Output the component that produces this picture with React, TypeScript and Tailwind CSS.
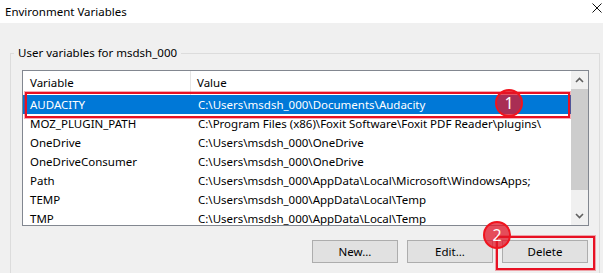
const rows = [
  { name: "AUDACITY", value: "C:\\Users\\msdsh_000\\Documents\\Audacity", selected: true },
  { name: "MOZ_PLUGIN_PATH", value: "C:\\Program Files (x86)\\Foxit Software\\Foxit PDF Reader\\plugins\\" },
  { name: "OneDrive", value: "C:\\Users\\msdsh_000\\OneDrive" },
  { name: "OneDriveConsumer", value: "C:\\Users\\msdsh_000\\OneDrive" },
  { name: "Path", value: "C:\\Users\\msdsh_000\\AppData\\Local\\Microsoft\\WindowsApps;" },
  { name: "TEMP", value: "C:\\Users\\msdsh_000\\AppData\\Local\\Temp" },
  { name: "TMP", value: "C:\\Users\\msdsh_000\\AppData\\Local\\Temp" },
];

function Marker({ n, className }: { n: number; className: string }) {
  return (
    <div
      className={`absolute w-[28px] h-[28px] rounded-full bg-[rgba(226,22,40,0.75)] border-2 border-[#f0141e] flex items-center justify-center text-white text-[16px] leading-none ${className}`}
    >
      {n}
    </div>
  );
}

function WinButton({ label }: { label: string }) {
  return (
    <button className="w-[86px] h-[23px] bg-[#e1e1e1] border border-[#adadad] text-[11.5px] text-black">
      {label}
    </button>
  );
}

export default function App() {
  return (
    <div
      className="relative w-[603px] h-[273px] overflow-hidden bg-[#f0f0f0] text-black"
      style={{ fontFamily: '"Noto Sans", "Open Sans", sans-serif' }}
    >
      {/* title bar */}
      <div className="h-[23px] bg-white flex items-center justify-between pl-[5px] pr-[1px]">
        <span className="text-[11.5px] leading-none">Environment Variables</span>
        <svg width="10" height="10" viewBox="0 0 10 10" className="mb-[8px]">
          <path d="M0.5 0.5 L9.5 9.5 M9.5 0.5 L0.5 9.5" stroke="#111" strokeWidth="1" />
        </svg>
      </div>

      <fieldset className="mt-[22px] ml-[10px] w-[590px] h-[240px] border border-[#dcdcdc]">
        <legend className="ml-[3px] px-[4px] text-[11.5px] leading-[16px]">User variables for msdsh_000</legend>

        {/* list view */}
        <div className="mt-[9px] ml-[11px] w-[567px] h-[156px] border border-[#828790] bg-white flex text-[11.5px]">
          <div className="flex-1 overflow-hidden">
            <div className="h-[24px] flex items-center">
              <div className="w-[168px] h-full pl-[7px] flex items-center border-r border-[#e5e5e5]">Variable</div>
              <div className="pl-[6px]">Value</div>
            </div>
            {rows.map((r) => (
              <div
                key={r.name}
                className={`h-[19px] flex items-center whitespace-nowrap ${r.selected ? "bg-[#0078d7] text-white" : ""}`}
              >
                <div className="w-[168px] pl-[7px] shrink-0">{r.name}</div>
                <div className="pl-[7px]">{r.value}</div>
              </div>
            ))}
          </div>

          {/* scrollbar */}
          <div className="w-[17px] bg-[#f0f0f0] flex flex-col items-center">
            <div className="h-[18px] flex items-center justify-center">
              <svg width="9" height="6" viewBox="0 0 9 6">
                <path d="M1 5 L4.5 1.5 L8 5" stroke="#606060" strokeWidth="1.6" fill="none" />
              </svg>
            </div>
            <div className="w-full h-[101px] bg-[#cdcdcd]" />
            <div className="flex-1" />
            <div className="h-[18px] flex items-center justify-center">
              <svg width="9" height="6" viewBox="0 0 9 6">
                <path d="M1 1 L4.5 4.5 L8 1" stroke="#606060" strokeWidth="1.6" fill="none" />
              </svg>
            </div>
          </div>
        </div>

        <div className="mt-[14px] w-[577px] flex justify-end gap-[9px]">
          <WinButton label="New..." />
          <WinButton label="Edit..." />
          <WinButton label="Delete" />
        </div>
      </fieldset>

      {/* annotations */}
      <div className="absolute left-[25px] top-[92px] w-[545px] h-[26px] border-2 border-[#e81123] shadow-[0_0_0_1px_rgba(232,17,35,0.35)]" />
      <Marker n={1} className="left-[495px] top-[89px]" />
      <div className="absolute left-[496px] top-[236px] w-[99px] h-[34px] border-2 border-[#e81123] shadow-[0_0_0_1px_rgba(232,17,35,0.35)]" />
      <Marker n={2} className="left-[483px] top-[221px]" />
    </div>
  );
}
